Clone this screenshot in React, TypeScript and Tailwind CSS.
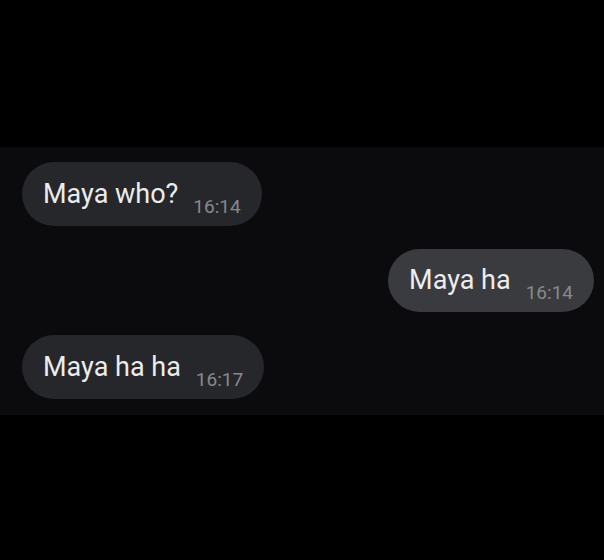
import React from "react";

type Msg = { text: string; time: string; mine: boolean };

const msgs: Msg[] = [
  { text: "Maya who?", time: "16:14", mine: false },
  { text: "Maya ha", time: "16:14", mine: true },
  { text: "Maya ha ha", time: "16:17", mine: false },
];

function Bubble({ m }: { m: Msg }) {
  return (
    <div className={m.mine ? "flex justify-end pr-[10px]" : "flex justify-start pl-[22px]"}>
      <div
        className={
          m.mine
            ? "flex items-end h-[63px] rounded-full bg-[#3a3b3f] pl-[21px] pr-[21px]"
            : "flex items-end h-[64px] rounded-full bg-[#26272b] pl-[21px] pr-[21px]"
        }
      >
        <span className="text-[27px] leading-[30px] mb-[17px] text-[#ececed] whitespace-nowrap">{m.text}</span>
        <span className="text-[19px] leading-[20px] mb-[9px] ml-[15px] text-[#88898c] whitespace-nowrap">{m.time}</span>
      </div>
    </div>
  );
}

export default function App() {
  return (
    <div
      className="w-[604px] h-[560px] bg-black flex flex-col pt-[147px]"
      style={{ fontFamily: "Roboto, 'Noto Sans', sans-serif" }}
    >
      <div className="h-[268px] bg-[#0b0b0d] flex flex-col gap-[23px] pt-[15px]">
        {msgs.map((m, i) => (
          <Bubble key={i} m={m} />
        ))}
      </div>
    </div>
  );
}
